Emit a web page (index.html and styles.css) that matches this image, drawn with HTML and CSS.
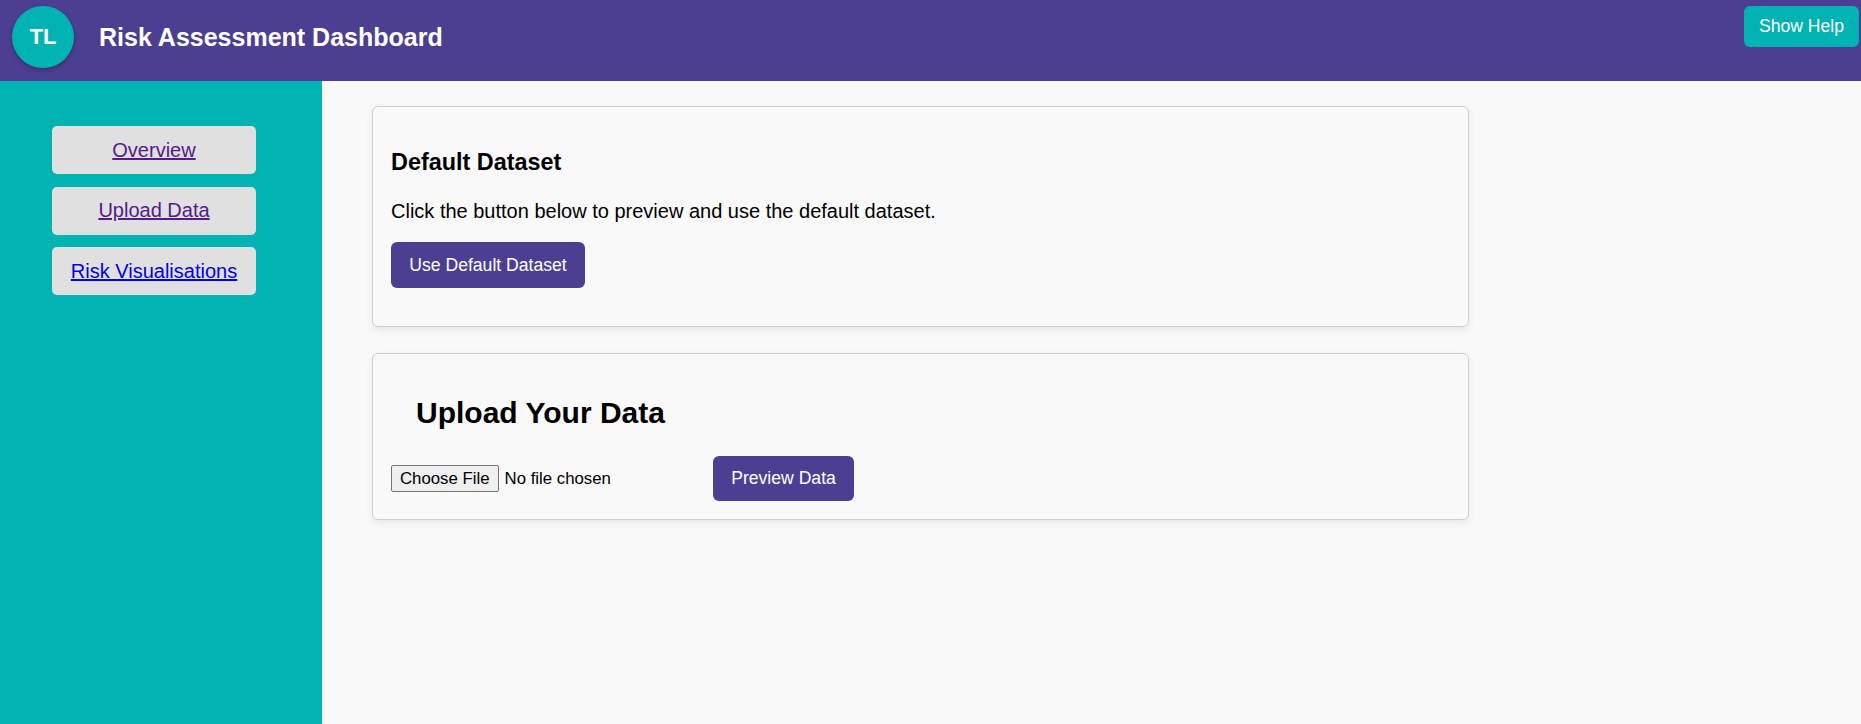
FILE: index.html
```html
<!DOCTYPE html>
<html lang="en">
<head>
<meta charset="utf-8">
<title>Risk Assessment Dashboard</title>
<link rel="stylesheet" href="styles.css">
</head>
<body>
<header class="topbar">
  <div class="logo">TL</div>
  <h1 class="title">Risk Assessment Dashboard</h1>
  <button class="help-btn">Show Help</button>
</header>
<div class="layout">
  <nav class="sidebar">
    <a class="nav-item visited" href="#overview">Overview</a>
    <a class="nav-item visited" href="#upload">Upload Data</a>
    <a class="nav-item" href="#risk">Risk Visualisations</a>
  </nav>
  <main class="main">
    <section class="card card-default">
      <h3 class="card-title">Default Dataset</h3>
      <p class="card-text">Click the button below to preview and use the default dataset.</p>
      <button class="primary-btn btn-default">Use Default Dataset</button>
    </section>
    <section class="card card-upload">
      <h2 class="upload-title">Upload Your Data</h2>
      <div class="upload-row">
        <input class="file-input" type="file">
        <button class="primary-btn btn-preview">Preview Data</button>
      </div>
    </section>
  </main>
</div>
</body>
</html>
```

FILE: styles.css
```css
html, body {
  margin: 0;
  padding: 0;
}
body {
  background: #f9f9f9;
  font-family: "Liberation Sans", Arial, sans-serif;
  color: #000;
}
.topbar {
  height: 81px;
  box-sizing: border-box;
  background: #4c3f91;
  display: flex;
  align-items: flex-start;
  padding: 6px 2px 0 12px;
}
.logo {
  width: 62px;
  height: 62px;
  border-radius: 50%;
  background: #00b3b3;
  color: #fff;
  font-weight: bold;
  font-size: 22px;
  display: flex;
  align-items: center;
  justify-content: center;
  box-shadow: 0 2px 5px rgba(0, 0, 0, 0.25);
  flex: none;
}
.title {
  margin: 0 0 0 25px;
  font-size: 25px;
  line-height: 62px;
  color: #fff;
  font-weight: bold;
}
.help-btn {
  margin-left: auto;
  width: 115px;
  height: 41px;
  border: none;
  border-radius: 6px;
  background: #00b3b3;
  color: #fff;
  font-family: inherit;
  font-size: 17.6px;
  padding: 0;
}
.layout {
  display: flex;
  min-height: 643px;
}
.sidebar {
  width: 322px;
  flex: none;
  background: #00b3b3;
  box-sizing: border-box;
  padding: 45px 0 0 52px;
  display: flex;
  flex-direction: column;
  gap: 12.5px;
}
.nav-item {
  width: 204px;
  height: 48px;
  box-sizing: border-box;
  background: #e0e0e0;
  border-radius: 5px;
  display: flex;
  align-items: center;
  justify-content: center;
  font-size: 20px;
  color: #0000ee;
  text-decoration: underline;
}
.nav-item.visited {
  color: #551a8b;
}
.main {
  flex: 1;
  padding: 25px 0 0 50px;
  display: flex;
  flex-direction: column;
  gap: 26.5px;
}
.card {
  width: 1097px;
  box-sizing: border-box;
  background: #f9f9f9;
  border: 1px solid #cfcfcf;
  border-radius: 6px;
  padding: 17px 18px;
  box-shadow: 0 3px 7px rgba(0, 0, 0, 0.08);
}
.card-title {
  margin: 25px 0 23.5px;
  font-size: 23.4px;
  line-height: 27px;
  font-weight: bold;
}
.card-text {
  margin: 0 0 19.5px;
  font-size: 20px;
  line-height: 23px;
}
.primary-btn {
  display: block;
  height: 46px;
  border: none;
  border-radius: 6px;
  background: #4c3f91;
  color: #fff;
  font-family: inherit;
  font-size: 17.6px;
  padding: 0;
  white-space: nowrap;
}
.btn-default {
  width: 194px;
  margin-bottom: 20.5px;
}
.upload-title {
  margin: 25px 0 25px 25px;
  font-size: 30px;
  line-height: 34.5px;
  font-weight: bold;
}
.upload-row {
  display: flex;
  align-items: center;
  margin-bottom: 1px;
}
.file-input {
  width: 322px;
  font-family: inherit;
  font-size: 16.8px;
  color: #000;
  margin: 0;
  padding: 0;
}
.file-input::file-selector-button {
  font-family: inherit;
  font-size: 16.8px;
  line-height: 19px;
  height: 26.5px;
  padding: 0 8px;
  margin-right: 6px;
  border: 1px solid #767676;
  border-radius: 2px;
  background: #efefef;
  color: #000;
}
.btn-preview {
  width: 141px;
  height: 45.5px;
}
```
